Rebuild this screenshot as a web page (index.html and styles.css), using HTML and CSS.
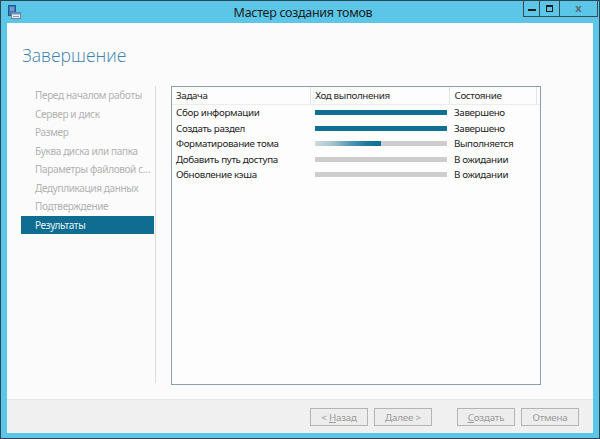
FILE: index.html
```html
<!DOCTYPE html>
<html lang="ru">
<head>
<meta charset="utf-8">
<title>Мастер создания томов</title>
<link rel="stylesheet" href="styles.css">
</head>
<body>
<div class="window">
  <div class="titlebar">
    <div class="tb-left">
      <svg class="app-icon" width="13" height="14" viewBox="0 0 13 14">
        <rect x="0.5" y="0.5" width="7" height="10" fill="#3d78b8" stroke="#2a5588"/>
        <line x1="2" y1="3" x2="6" y2="3" stroke="#9cc4ea"/>
        <line x1="2" y1="5" x2="6" y2="5" stroke="#9cc4ea"/>
        <rect x="3.5" y="7.5" width="9" height="6" fill="#e8eef2" stroke="#6f8494"/>
        <rect x="4" y="8" width="8" height="1.5" fill="#5c9ad0"/>
        <rect x="5" y="11" width="6" height="1" fill="#8a9aa6"/>
      </svg>
    </div>
    <div class="tb-title">Мастер создания томов</div>
    <div class="tb-right">
      <div class="controls">
        <div class="ctl ctl-min"><span class="glyph-min"></span></div>
        <div class="ctl ctl-max"><span class="glyph-max"></span></div>
        <div class="ctl ctl-close"><span class="glyph-close">x</span></div>
      </div>
    </div>
  </div>
  <div class="client">
    <div class="head"><h1>Завершение</h1></div>
    <div class="body">
      <nav class="nav">
        <div class="nav-item">Перед началом работы</div>
        <div class="nav-item">Сервер и диск</div>
        <div class="nav-item">Размер</div>
        <div class="nav-item">Буква диска или папка</div>
        <div class="nav-item">Параметры файловой системы</div>
        <div class="nav-item">Дедупликация данных</div>
        <div class="nav-item">Подтверждение</div>
        <div class="nav-item active">Результаты</div>
      </nav>
      <div class="table">
        <div class="thead">
          <div class="th c1">Задача</div>
          <div class="th c2">Ход выполнения</div>
          <div class="th c3">Состояние</div>
          <div class="th c4"></div>
        </div>
        <div class="row">
          <div class="c1">Сбор информации</div>
          <div class="c2"><div class="bar"><div class="fill" style="width:100%"></div></div></div>
          <div class="c3">Завершено</div>
        </div>
        <div class="row">
          <div class="c1">Создать раздел</div>
          <div class="c2"><div class="bar"><div class="fill" style="width:100%"></div></div></div>
          <div class="c3">Завершено</div>
        </div>
        <div class="row">
          <div class="c1">Форматирование тома</div>
          <div class="c2"><div class="bar"><div class="fill running" style="width:50%"></div></div></div>
          <div class="c3">Выполняется</div>
        </div>
        <div class="row">
          <div class="c1">Добавить путь доступа</div>
          <div class="c2"><div class="bar"></div></div>
          <div class="c3">В ожидании</div>
        </div>
        <div class="row">
          <div class="c1">Обновление кэша</div>
          <div class="c2"><div class="bar"></div></div>
          <div class="c3">В ожидании</div>
        </div>
      </div>
    </div>
    <div class="footer">
      <div class="btn"><span>&lt; <u>Н</u>азад</span></div>
      <div class="btn"><span><u>Д</u>алее &gt;</span></div>
      <div class="btn gap"><span><u>С</u>оздать</span></div>
      <div class="btn"><span>Отмена</span></div>
    </div>
  </div>
</div>
</body>
</html>
```

FILE: styles.css
```css
html, body {
  margin: 0;
  padding: 0;
  background: #5cc6e8;
}
body {
  width: 600px;
  height: 439px;
  overflow: hidden;
  font-family: "Noto Sans", "Open Sans", sans-serif;
}
.window {
  box-sizing: border-box;
  width: 600px;
  height: 439px;
  border: 1px solid #2e4652;
  background: #5cc6e8;
  display: flex;
  flex-direction: column;
}
.titlebar {
  height: 22px;
  flex: none;
  display: grid;
  grid-template-columns: 1fr auto 1fr;
  align-items: start;
  padding: 0 1px 0 7px;
}
.tb-left {
  padding-top: 4px;
}
.app-icon {
  display: block;
}
.tb-title {
  font-size: 12.5px;
  letter-spacing: -0.3px;
  color: #1c1c1c;
  line-height: 22px;
  padding-top: 1px;
}
.tb-right {
  display: flex;
  justify-content: flex-end;
}
.controls {
  display: flex;
  height: 15px;
  border: 1px solid #3c4a52;
  border-top: none;
}
.ctl {
  display: flex;
  align-items: center;
  justify-content: center;
  height: 15px;
}
.ctl + .ctl {
  border-left: 1px solid #3c4a52;
}
.ctl-min { width: 15px; }
.ctl-max { width: 19px; }
.ctl-close { width: 37px; }
.glyph-min {
  display: block;
  width: 8px;
  height: 2px;
  background: #1a1a1a;
  margin-top: 3px;
}
.glyph-max {
  display: block;
  width: 5px;
  height: 4px;
  border: 1px solid #1a1a1a;
  border-top-width: 2px;
}
.glyph-close {
  font-size: 11px;
  line-height: 1;
  color: #5a6c76;
  font-weight: bold;
  margin-top: -2px;
}
.client {
  flex: none;
  height: 410px;
  margin: 0 6px;
  background: #fbfbfb;
  display: flex;
  flex-direction: column;
}
.head {
  height: 63px;
  flex: none;
  padding-left: 15px;
}
h1 {
  margin: 0;
  padding-top: 20px;
  font-family: "Open Sans", "Noto Sans", sans-serif;
  font-weight: 300;
  font-size: 17.5px;
  line-height: 24px;
  color: #3a82aa;
}
.body {
  height: 298px;
  flex: none;
  display: flex;
  padding-left: 14px;
}
.nav {
  width: 134px;
  border-right: 1px solid #dcdcdc;
  height: 297px;
}
.nav-item {
  height: 18.5px;
  line-height: 18.5px;
  padding-left: 14px;
  font-size: 10px;
  letter-spacing: -0.35px;
  color: #b2b2b2;
  white-space: nowrap;
  overflow: hidden;
  text-overflow: ellipsis;
  width: 119px;
}
.nav-item.active {
  background: #0e6d90;
  color: #e4f0f4;
}
.table {
  margin-left: 15px;
  width: 368px;
  height: 297px;
  border: 1px solid #8b9eb0;
  background: #fdfdfd;
  font-size: 9.8px;
  letter-spacing: -0.35px;
  color: #1e1e1e;
}
.thead {
  display: flex;
  height: 17px;
  border-bottom: 1px solid #ececec;
}
.th {
  line-height: 17px;
  color: #2a2a2a;
}
.th + .th {
  border-left: 1px solid #e4e4e4;
}
.c1 { width: 135px; padding-left: 4px; }
.c2 { width: 135px; padding-left: 4px; }
.c3 { width: 82px; padding-left: 4px; }
.c4 { width: 3px; }
.row {
  display: flex;
  height: 15.5px;
  line-height: 15px;
  align-items: center;
  white-space: nowrap;
}
.row .c2 { padding-left: 4px; width: 135px; }
.bar {
  width: 132px;
  height: 5px;
  background: #cdcdcd;
  display: flex;
}
.fill {
  height: 100%;
  background: #0f7093;
}
.fill.running {
  background: linear-gradient(to right, #d0dadd 0%, #a9c6d0 25%, #4d97b3 55%, #1b7899 80%, #0f7093 100%);
}
.footer {
  margin-top: auto;
  border-top: 1px solid #e6e6e6;
  background: #f0f0f0;
  display: flex;
  align-items: flex-start;
  justify-content: flex-end;
  padding: 8px 14px 0 0;
  box-sizing: border-box;
  height: 34px;
}
.btn {
  box-sizing: border-box;
  width: 58px;
  height: 18px;
  border: 1px solid #b4b4b4;
  background: #ededed;
  margin-left: 6px;
  display: flex;
  align-items: center;
  justify-content: center;
  font-size: 9.8px;
  letter-spacing: -0.2px;
  color: #9a9a9a;
}
.btn.gap {
  margin-left: 25px;
}
.btn u {
  text-decoration: underline;
}
```
